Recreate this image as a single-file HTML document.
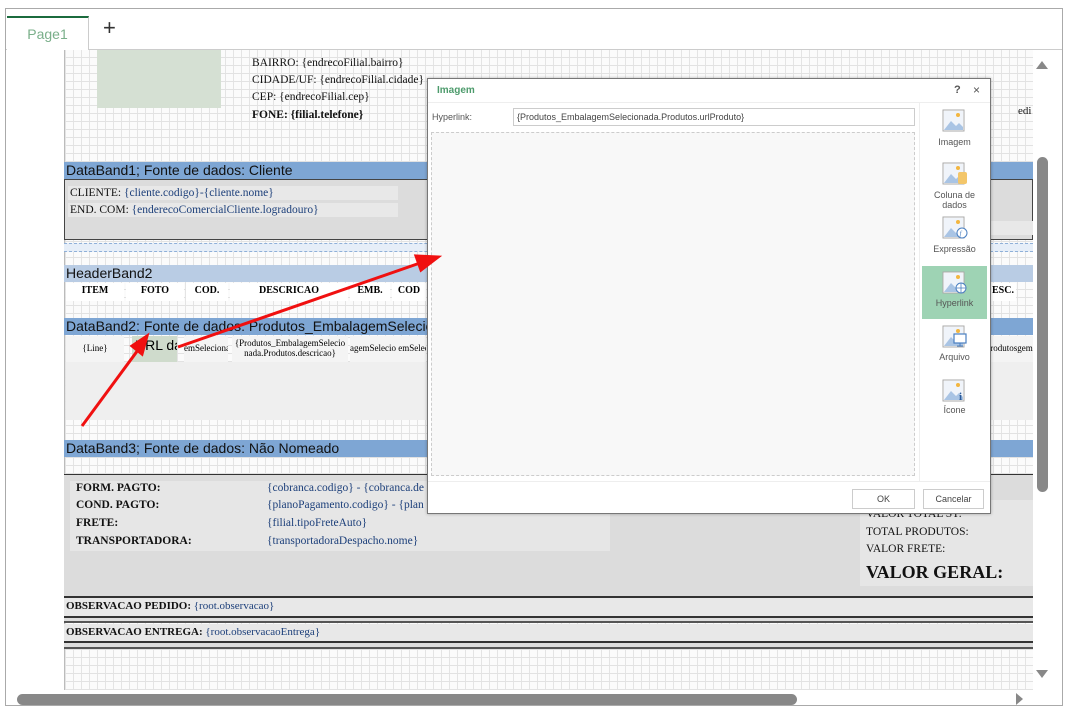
<!DOCTYPE html>
<html><head><meta charset="utf-8"><style>
*{margin:0;padding:0;box-sizing:border-box}
body{width:1069px;height:714px;overflow:hidden;background:#fff;font-family:"Liberation Sans",sans-serif;position:relative}
.a{position:absolute}
.grid{background-color:#fbfbfb;background-image:repeating-linear-gradient(0deg,#e2e2e2 0 1px,transparent 1px 8px),repeating-linear-gradient(90deg,#e4e4e4 0 1px,transparent 1px 8px)}
.bar{position:absolute;left:64px;width:969px;height:17px;background:#7ea6d4;color:#111;font-size:14px;line-height:17px;padding-left:2px;white-space:nowrap;overflow:hidden}
.t{position:absolute;font-family:"Liberation Serif",serif;font-size:11.5px;white-space:nowrap;color:#111}
.b{font-weight:bold}
.blue{color:#1c3f7a}
.hdr{position:absolute;top:283px;height:18px;font-family:"Liberation Serif",serif;font-size:10px;font-weight:bold;text-align:center;line-height:16px;background:#fff}
.cell{position:absolute;top:336px;height:26px;font-family:"Liberation Serif",serif;font-size:9px;text-align:center;background:#f4f4f4;line-height:10px;overflow:hidden;white-space:nowrap}
.lbl{position:absolute;left:922px;width:65px;text-align:center;font-size:9px;color:#555;line-height:10px}
</style></head><body>
<div class="a" style="left:5px;top:8px;width:1058px;height:698px;border:1px solid #aaa"></div>
<div class="a" style="left:6px;top:49px;width:1056px;height:1px;background:#ccc"></div>
<div class="a" style="left:7px;top:16px;width:82px;height:34px;border-top:2px solid #1b6b3d;border-right:1px solid #ccc;background:#fff;color:#7aaf8a;font-size:14px;text-align:center;line-height:32px">Page1</div>
<div class="a" style="left:103px;top:15px;font-size:22px;color:#333">+</div>
<div class="a grid" style="left:64px;top:50px;width:969px;height:640px;border-left:1px solid #bbb"></div>
<div class="a" style="left:97px;top:50px;width:124px;height:58px;background:#d5e0d3"></div>
<div class="t" style="left:252px;top:57px">BAIRRO: {endrecoFilial.bairro}</div>
<div class="t" style="left:252px;top:74px">CIDADE/UF: {endrecoFilial.cidade}</div>
<div class="t" style="left:252px;top:91px">CEP: {endrecoFilial.cep}</div>
<div class="t b" style="left:252px;top:109px">FONE: {filial.telefone}</div>
<div class="t" style="left:1018px;top:105px;font-size:11px">edi</div>
<div class="bar" style="top:162px">DataBand1; Fonte de dados: Cliente</div>
<div class="a" style="left:64px;top:179px;width:969px;height:61px;background:#dcdcdc;border:1px solid #444"></div>
<div class="a" style="left:68px;top:186px;width:330px;height:14px;background:#e8e8e8"></div>
<div class="a" style="left:68px;top:203px;width:330px;height:14px;background:#e8e8e8"></div>
<div class="a" style="left:990px;top:221px;width:43px;height:14px;background:#e8e8e8"></div>
<div class="t" style="left:70px;top:187px">CLIENTE: <span class="blue">{cliente.codigo}-{cliente.nome}</span></div>
<div class="t" style="left:70px;top:204px">END. COM: <span class="blue">{enderecoComercialCliente.logradouro}</span></div>
<div class="a" style="left:64px;top:243px;width:969px;height:9px;background:#e6eef8;border-top:1px dashed #8fb0d8;border-bottom:1px dashed #8fb0d8"></div>
<div class="bar" style="top:265px;background:#b9cce4">HeaderBand2</div>
<div class="hdr" style="left:66px;width:58px">ITEM</div>
<div class="hdr" style="left:126px;width:58px">FOTO</div>
<div class="hdr" style="left:186px;width:42px">COD.</div>
<div class="hdr" style="left:230px;width:118px">DESCRICAO</div>
<div class="hdr" style="left:350px;width:40px">EMB.</div>
<div class="hdr" style="left:392px;width:34px">COD</div>
<div class="hdr" style="left:990px;width:26px">ESC.</div>
<div class="bar" style="top:318px">DataBand2: Fonte de dados: Produtos_EmbalagemSelecionada</div>
<div class="cell" style="left:66px;width:58px;line-height:24px">{Line}</div>
<div class="a" style="left:132px;top:336px;width:45px;height:26px;background:#cfdbcc;font-size:14px;line-height:18px;overflow:hidden;white-space:nowrap;padding-left:3px">URL da</div>
<div class="cell" style="left:184px;width:44px;line-height:24px">emSeleciona</div>
<div class="cell" style="left:232px;width:116px;padding-top:2px">{Produtos_EmbalagemSelecio<br>nada.Produtos.descricao}</div>
<div class="cell" style="left:350px;width:76px;line-height:24px">agemSelecio emSelecio</div>
<div class="cell" style="left:990px;width:43px;line-height:24px">rodutosgem</div>
<div class="a" style="left:66px;top:362px;width:967px;height:58px;background:#efefef"></div>
<div class="bar" style="top:440px">DataBand3; Fonte de dados: Não Nomeado</div>
<div class="a" style="left:64px;top:474px;width:969px;height:124px;background:#dcdcdc;border-top:1px solid #333;border-bottom:2px solid #333"></div>
<div class="a" style="left:70px;top:481px;width:540px;height:70px;background:#e6e6e6"></div>
<div class="a" style="left:860px;top:500px;width:173px;height:86px;background:#e6e6e6"></div>
<div class="t b" style="left:76px;top:482px">FORM. PAGTO:</div>
<div class="t b" style="left:76px;top:499px">COND. PAGTO:</div>
<div class="t b" style="left:76px;top:517px">FRETE:</div>
<div class="t b" style="left:76px;top:535px">TRANSPORTADORA:</div>
<div class="t blue" style="left:267px;top:482px">{cobranca.codigo} - {cobranca.de</div>
<div class="t blue" style="left:267px;top:499px">{planoPagamento.codigo} - {plan</div>
<div class="t blue" style="left:267px;top:517px">{filial.tipoFreteAuto}</div>
<div class="t blue" style="left:267px;top:535px">{transportadoraDespacho.nome}</div>
<div class="t" style="left:866px;top:508px">VALOR TOTAL ST:</div>
<div class="t" style="left:866px;top:526px">TOTAL PRODUTOS:</div>
<div class="t" style="left:866px;top:543px">VALOR FRETE:</div>
<div class="t b" style="left:866px;top:562px;font-size:18px">VALOR GERAL:</div>
<div class="a" style="left:64px;top:598px;width:969px;height:20px;background:#e8e8e8;border-bottom:2px solid #333"></div>
<div class="t" style="left:66px;top:600px;font-size:11px"><b>OBSERVACAO PEDIDO:</b> <span class="blue">{root.observacao}</span></div>
<div class="a" style="left:64px;top:618px;width:969px;height:5px;background:#ddd;border-bottom:2px solid #555"></div>
<div class="a" style="left:64px;top:624px;width:969px;height:19px;background:#e8e8e8;border-bottom:2px solid #333"></div>
<div class="t" style="left:66px;top:626px;font-size:11px"><b>OBSERVACAO ENTREGA:</b> <span class="blue">{root.observacaoEntrega}</span></div>
<div class="a" style="left:64px;top:643px;width:969px;height:6px;background:#ddd;border-bottom:2px solid #555"></div>
<div class="a" style="left:1033px;top:50px;width:20px;height:640px;background:#fff"></div>
<div class="a" style="left:1037px;top:157px;width:11px;height:335px;background:#888;border-radius:6px"></div>
<div class="a" style="left:1036px;top:61px;width:0;height:0;border-left:6px solid transparent;border-right:6px solid transparent;border-bottom:8px solid #888"></div>
<div class="a" style="left:1036px;top:670px;width:0;height:0;border-left:6px solid transparent;border-right:6px solid transparent;border-top:8px solid #888"></div>
<div class="a" style="left:6px;top:690px;width:1048px;height:15px;background:#fff"></div>
<div class="a" style="left:17px;top:694px;width:780px;height:11px;background:#888;border-radius:6px"></div>
<div class="a" style="left:1016px;top:693px;width:0;height:0;border-top:6px solid transparent;border-bottom:6px solid transparent;border-left:7px solid #888"></div>
<div class="a" style="left:427px;top:78px;width:564px;height:436px;background:#fff;border:1px solid #777;box-shadow:0 0 3px rgba(0,0,0,.3)"></div>
<div class="a" style="left:437px;top:85px;font-size:10px;font-weight:bold;color:#4d9b6c">Imagem</div>
<div class="a" style="left:954px;top:84px;font-size:11px;color:#555;font-weight:bold">?</div>
<div class="a" style="left:973px;top:83px;font-size:12px;color:#555">×</div>
<div class="a" style="left:428px;top:102px;width:562px;height:1px;background:#eee"></div>
<div class="a" style="left:432px;top:112px;font-size:9px;color:#555">Hyperlink:</div>
<div class="a" style="left:513px;top:108px;width:402px;height:18px;border:1px solid #ccc;font-size:9px;color:#444;line-height:16px;padding-left:3px">{Produtos_EmbalagemSelecionada.Produtos.urlProduto}</div>
<div class="a" style="left:431px;top:132px;width:484px;height:344px;background:#f8f8f8;border:1px dashed #ccc"></div>
<div class="a" style="left:919px;top:103px;width:1px;height:378px;background:#eee"></div>
<div class="a" style="left:428px;top:481px;width:562px;height:1px;background:#eee"></div>
<div class="a" style="left:852px;top:489px;width:63px;height:20px;border:1px solid #ccc;font-size:9px;color:#444;text-align:center;line-height:18px">OK</div>
<div class="a" style="left:923px;top:489px;width:61px;height:20px;border:1px solid #ccc;font-size:9px;color:#444;text-align:center;line-height:18px">Cancelar</div>
<div class="a" style="left:922px;top:266px;width:65px;height:53px;background:#9ed3b4"></div>
<svg class="a" style="left:0;top:0" width="1069" height="714">
<defs><g id="pic"><rect x="0" y="0" width="21" height="21" fill="#fff" stroke="#aaa"/><rect x="1" y="1" width="19" height="19" fill="#f0f4fa"/><circle cx="15" cy="5" r="2" fill="#f3b640"/><path d="M1 20 L8 11 L13 16 L16 13 L20 17 L20 20Z" fill="#a9c4e4"/></g></defs>
<use href="#pic" x="943" y="110"/>
<use href="#pic" x="943" y="163"/><rect x="958" y="172" width="9" height="12" rx="2" fill="#f3c66a"/>
<use href="#pic" x="943" y="217"/><circle cx="962" cy="233" r="5" fill="#fff" stroke="#4a7fc0"/><text x="959.5" y="236" font-size="7" fill="#4a7fc0" font-style="italic" font-family="Liberation Serif">f</text>
<use href="#pic" x="943" y="272"/><circle cx="961" cy="288" r="5" fill="#fff" stroke="#4a7fc0"/><path d="M956 288h10M961 283v10" stroke="#4a7fc0" stroke-width=".8"/>
<use href="#pic" x="943" y="326"/><rect x="954" y="334" width="12" height="9" fill="#fff" stroke="#4a7fc0" stroke-width="1.2"/><path d="M960 343v3M957 346h6" stroke="#4a7fc0"/>
<use href="#pic" x="943" y="380"/><text x="959" y="400" font-size="11" font-weight="bold" fill="#2a5a9a" font-family="Liberation Serif">i</text>
<g stroke="#f01010" stroke-width="3" fill="#f01010">
<line x1="82" y1="426" x2="138" y2="350"/><path d="M147 336 L132 346 L142 354Z"/>
<line x1="178" y1="347" x2="420" y2="263"/><path d="M438 257 L416 256 L421 270Z"/>
</g>
</svg>
<div class="lbl" style="top:137px">Imagem</div>
<div class="lbl" style="top:190px">Coluna de<br>dados</div>
<div class="lbl" style="top:244px">Expressão</div>
<div class="lbl" style="top:298px">Hyperlink</div>
<div class="lbl" style="top:352px">Arquivo</div>
<div class="lbl" style="top:405px">Ícone</div>
</body></html>
